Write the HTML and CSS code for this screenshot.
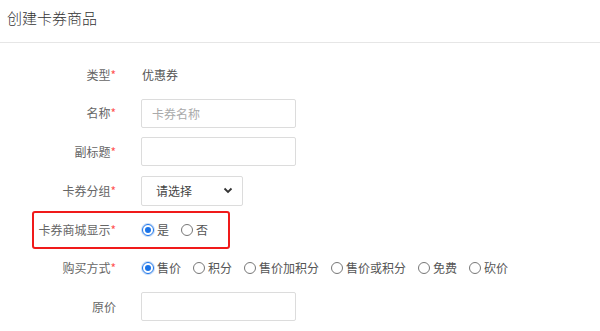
FILE: index.html
```html
<!DOCTYPE html>
<html lang="zh-CN">
<head>
<meta charset="utf-8">
<title>创建卡券商品</title>
<link rel="stylesheet" href="styles.css">
</head>
<body>
<div class="page">
  <div class="header">创建卡券商品</div>
  <div class="form">
    <div class="row">
      <div class="label">类型<span class="req">*</span></div>
      <div class="field text">优惠券</div>
    </div>
    <div class="row">
      <div class="label">名称<span class="req">*</span></div>
      <div class="field"><input class="input" type="text" placeholder="卡券名称"></div>
    </div>
    <div class="row">
      <div class="label">副标题<span class="req">*</span></div>
      <div class="field"><input class="input" type="text"></div>
    </div>
    <div class="row row-select">
      <div class="label">卡券分组<span class="req">*</span></div>
      <div class="field">
        <div class="select"><span>请选择</span>
          <svg class="chev" width="10" height="7" viewBox="0 0 10 7"><path d="M1.5 1.5 L5 5 L8.5 1.5" fill="none" stroke="#333" stroke-width="1.8"/></svg>
        </div>
      </div>
    </div>
    <div class="row highlight">
      <div class="label">卡券商城显示<span class="req">*</span></div>
      <div class="field radios">
        <label class="radio"><span class="dot on"></span>是</label>
        <label class="radio"><span class="dot"></span>否</label>
      </div>
      <div class="redbox"></div>
    </div>
    <div class="row">
      <div class="label">购买方式<span class="req">*</span></div>
      <div class="field radios">
        <label class="radio"><span class="dot on"></span>售价</label>
        <label class="radio"><span class="dot"></span>积分</label>
        <label class="radio"><span class="dot"></span>售价加积分</label>
        <label class="radio"><span class="dot"></span>售价或积分</label>
        <label class="radio"><span class="dot"></span>免费</label>
        <label class="radio"><span class="dot"></span>砍价</label>
      </div>
    </div>
    <div class="row">
      <div class="label">原价</div>
      <div class="field"><input class="input" type="text"></div>
    </div>
  </div>
</div>
</body>
</html>
```
FILE: styles.css
```css
* { box-sizing: border-box; }
html, body { margin: 0; padding: 0; background: #fff; }
body {
  font-family: "Noto Sans CJK SC", "Noto Sans", "Liberation Sans", sans-serif;
  font-size: 12px;
  color: #555;
}
.page { width: 600px; height: 331px; overflow: hidden; }
.header {
  height: 43px;
  padding: 8px 0 0 7px;
  font-size: 15px;
  font-weight: 300;
  color: #333;
  border-bottom: 1px solid #e6e6e6;
  line-height: 20px;
}
.form {
  position: relative;
  display: flex;
  flex-direction: column;
  gap: 9.5px;
  padding-top: 17px;
}
.row {
  position: relative;
  display: flex;
  align-items: center;
  min-height: 29px;
}
.label {
  width: 116px;
  text-align: right;
  color: #666;
  line-height: 16px;
}
.req { color: #f55; }
.field {
  margin-left: 25px;
  display: flex;
  align-items: center;
}
.text { color: #555; margin-left: 26px; }
.input {
  width: 155px;
  height: 29px;
  border: 1px solid #dcdcdc;
  border-radius: 2px;
  padding: 0 10px;
  font: inherit;
  font-size: 12px;
  color: #333;
  outline: none;
}
.input::placeholder { color: #aaa; }
.select {
  width: 102px;
  height: 30px;
  border: 1px solid #dcdcdc;
  border-radius: 2px;
  padding: 0 9px 0 14px;
  display: flex;
  align-items: center;
  justify-content: space-between;
  color: #444;
}
.chev { display: block; }
.radios { gap: 12px; margin-left: 26px; }
.radio {
  display: flex;
  align-items: center;
  gap: 3px;
  color: #555;
  line-height: 16px;
}
.dot {
  width: 12px;
  height: 12px;
  border: 1px solid #777;
  border-radius: 50%;
  display: inline-block;
  position: relative;
}
.dot.on {
  border-color: #1a73e8;
  box-shadow: 0 0 0 1px rgba(26,115,232,0.25);
}
.dot.on::after {
  content: "";
  position: absolute;
  left: 2px; top: 2px;
  width: 6px; height: 6px;
  border-radius: 50%;
  background: #1a73e8;
}
.redbox {
  position: absolute;
  left: 32px;
  top: -4px;
  width: 198px;
  height: 38px;
  border: 2px solid #f01a1a;
  border-radius: 3px;
  pointer-events: none;
}
```
